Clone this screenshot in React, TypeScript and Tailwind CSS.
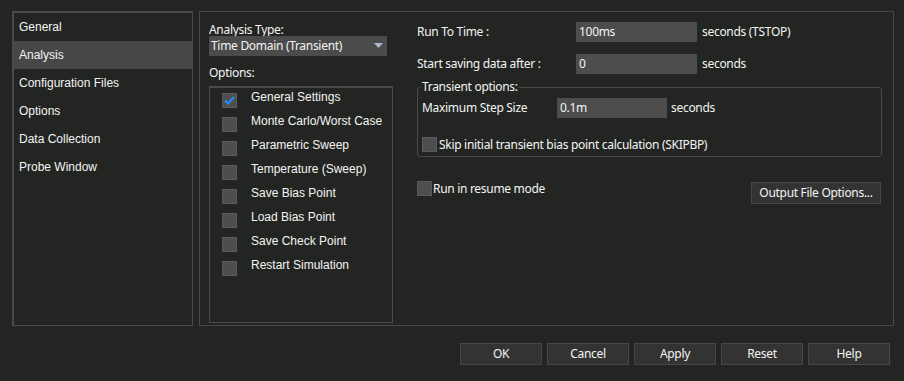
import React from "react";

const navItems = ["General", "Analysis", "Configuration Files", "Options", "Data Collection", "Probe Window"];
const optItems = [
  "General Settings",
  "Monte Carlo/Worst Case",
  "Parametric Sweep",
  "Temperature (Sweep)",
  "Save Bias Point",
  "Load Bias Point",
  "Save Check Point",
  "Restart Simulation",
];

const ui = { fontFamily: '"Noto Sans", "Open Sans", sans-serif' };
const arial = { fontFamily: '"Liberation Sans", Arial, sans-serif' };

function Box({ checked = false }: { checked?: boolean }) {
  return (
    <div className="w-[15px] h-[15px] shrink-0 bg-[#4e4e4e] border border-[#5a5a5a] flex items-center justify-center">
      {checked && (
        <svg width="11" height="9" viewBox="0 0 11 9">
          <path d="M1 4.5 L4 7.5 L10 1" stroke="#1e8fff" strokeWidth="2" fill="none" />
        </svg>
      )}
    </div>
  );
}

export default function App() {
  return (
    <div className="w-[904px] h-[381px] bg-[#232522] text-[#f4f4f4] overflow-hidden">
      <div className="flex pt-[11px] pl-[12px] gap-[6px]">
        {/* left nav */}
        <div className="w-[181px] h-[315px] border-2 border-[#4a4a4a] border-r-[1px] border-b-[1px] bg-[#232522]" style={arial}>
          {navItems.map((n) => (
            <div
              key={n}
              className={`h-[28px] flex items-center pl-[5px] text-[12px] ${n === "Analysis" ? "bg-[#474747]" : ""}`}
            >
              {n}
            </div>
          ))}
        </div>
        {/* main panel */}
        <div className="w-[695px] h-[315px] border border-[#474747] flex pl-[9px] gap-[24px]">
          {/* left column */}
          <div className="w-[184px] flex flex-col pt-[11px] tracking-[-0.3px]" style={ui}>
            <div className="text-[12px] leading-[14px] h-[13px]">Analysis Type:</div>
            <div className="h-[20px] w-[178px] bg-[#4b4b4b] flex items-center justify-between pl-[2px] pr-[4px] text-[12px]">
              <span>Time Domain (Transient)</span>
              <svg width="9" height="6" viewBox="0 0 9 6">
                <path d="M0 0 H9 L4.5 5 Z" fill="#a9b7cc" />
              </svg>
            </div>
            <div className="text-[12px] leading-[14px] mt-[10px]">Options:</div>
            <div className="mt-[6px] h-[237px] border border-[#4a4a4a] border-t-2 pt-[2px] tracking-normal" style={arial}>
              {optItems.map((o, i) => (
                <div key={o} className="h-[24px] flex items-start">
                  <div className="ml-[12px] mt-[3px]">
                    <Box checked={i === 0} />
                  </div>
                  <span className="ml-[14px] text-[12px] leading-[14px]">{o}</span>
                </div>
              ))}
            </div>
          </div>
          {/* right column */}
          <div className="w-[465px] flex flex-col pt-[10px] text-[12px] tracking-[-0.3px]" style={ui}>
            <div className="flex items-center h-[20px]">
              <span className="w-[159px]">Run To Time :</span>
              <div className="w-[121px] h-[20px] bg-[#4d4d4d] pl-[3px] flex items-center">100ms</div>
              <span className="ml-[5px]">seconds (TSTOP)</span>
            </div>
            <div className="flex items-center h-[20px] mt-[12px]">
              <span className="w-[159px]">Start saving data after :</span>
              <div className="w-[121px] h-[20px] bg-[#4d4d4d] pl-[3px] flex items-center">0</div>
              <span className="ml-[5px]">seconds</span>
            </div>
            <div className="relative mt-[13px] h-[70px] border border-[#4a4a4a] rounded-[3px] pl-[4px] pt-[10px]">
              <span className="absolute -top-[9px] left-[3px] px-[1px] bg-[#232522] leading-[16px]">Transient options:</span>
              <div className="flex items-center h-[20px]">
                <span className="w-[135px]">Maximum Step Size</span>
                <div className="w-[110px] h-[20px] bg-[#4d4d4d] pl-[3px] flex items-center">0.1m</div>
                <span className="ml-[4px]">seconds</span>
              </div>
              <div className="flex items-center mt-[19px] h-[15px]">
                <Box />
                <span className="ml-[2px]">Skip initial transient bias point calculation (SKIPBP)</span>
              </div>
            </div>
            <div className="flex justify-between items-start mt-[24px]">
              <div className="flex items-center h-[15px]">
                <Box />
                <span className="ml-[1px]">Run in resume mode</span>
              </div>
              <button className="w-[130px] h-[22px] mt-[1px] mr-[1px] bg-[#333333] border border-[#474747] text-[12px] flex items-center justify-center">
                Output File Options...
              </button>
            </div>
          </div>
        </div>
      </div>
      <div className="flex justify-end gap-[5px] pr-[14px] mt-[17px] tracking-[-0.3px]" style={ui}>
        {["OK", "Cancel", "Apply", "Reset", "Help"].map((b) => (
          <button
            key={b}
            className="w-[82px] h-[22px] bg-[#333333] border border-[#474747] text-[12px] flex items-center justify-center"
          >
            {b}
          </button>
        ))}
      </div>
    </div>
  );
}
